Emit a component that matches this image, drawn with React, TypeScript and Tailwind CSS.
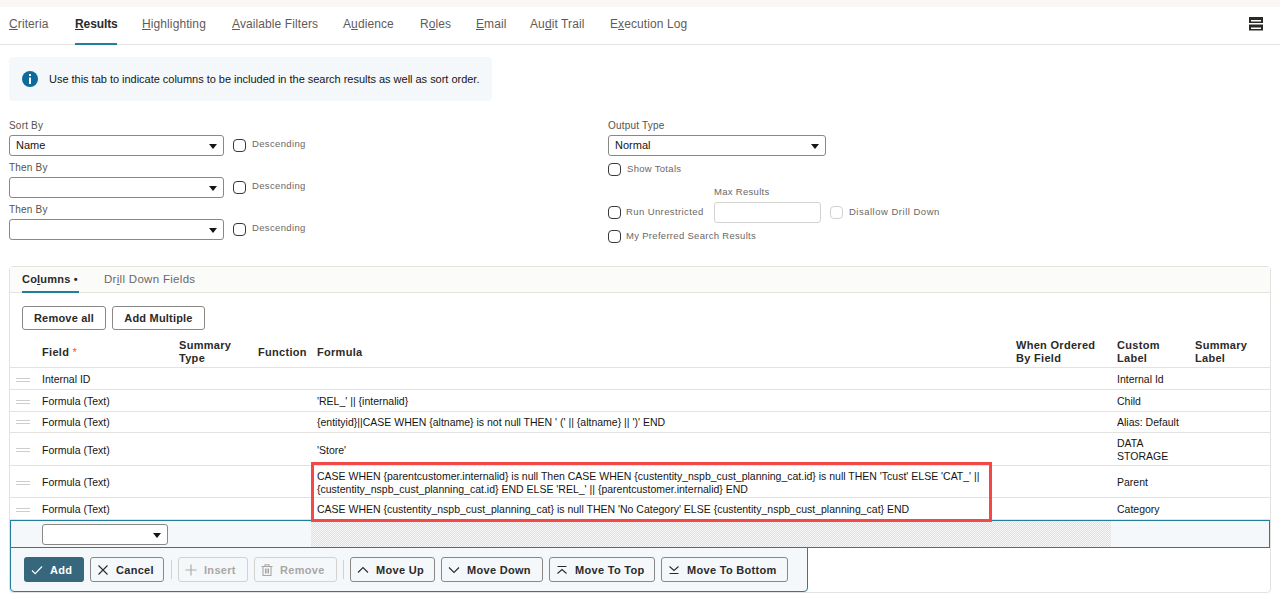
import type { ReactNode } from "react";

const Caret = () => (
  <svg width="8" height="5" viewBox="0 0 8 5" className="absolute right-[6px] top-[8px]">
    <path d="M0 0h8L4 5z" fill="#161513" />
  </svg>
);

const Select = ({ value, width }: { value?: string; width: string }) => (
  <div className={`relative h-[21px] rounded-[3px] border border-[#8a8886] bg-white pl-[6px] text-[11px] leading-[19px] text-[#161513] ${width}`}>
    {value}
    <Caret />
  </div>
);

const Box = ({ disabled }: { disabled?: boolean }) => (
  <span className={`block h-[13px] w-[13px] shrink-0 rounded-[4px] border bg-white ${disabled ? "border-[#d4d2cf]" : "border-[#3a3937]"}`} />
);

const Label = ({ children }: { children: ReactNode }) => (
  <div className="h-[12px] text-[10px] leading-[12px] tracking-[0.2px] text-[#55524e]">{children}</div>
);

const SortField = ({ label, value, first }: { label: string; value?: string; first?: boolean }) => (
  <div className={first ? "" : "mt-[6px]"}>
    <Label>{label}</Label>
    <div className="mt-[3px] flex items-center">
      <Select value={value} width="w-[215px]" />
      <span className="-mt-px ml-[9px]"><Box /></span>
      <span className="-mt-[3px] ml-[6px] text-[9.5px] tracking-[0.35px] text-[#6b6864]">Descending</span>
    </div>
  </div>
);

// toolbar icons, all on a 12px box
const Icon = ({ d, color = "#2b2a28" }: { d: string; color?: string }) => (
  <svg width="12" height="12" viewBox="0 0 12 12" fill="none" stroke={color} strokeWidth="1.1" className="shrink-0">
    <path d={d} />
  </svg>
);

const ToolButton = ({ icon, text, width, disabled }: { icon: ReactNode; text: string; width: string; disabled?: boolean }) => (
  <div className={`flex h-[25px] items-center gap-[7px] rounded-[3px] border pl-[6px] text-[11px] font-bold tracking-[0.3px] ${width} ${disabled ? "border-[#d4d2cf] text-[#a9a7a3]" : "border-[#8a8886] text-[#2b2a28]"}`}>
    {icon}
    <span className="mt-[1px]">{text}</span>
  </div>
);

const Sep = ({ left }: { left: string }) => <div className={`mr-[6px] h-[19px] w-px bg-[#d4d2cf] ${left}`} />;

const tabs: [string, string, string, string][] = [
  ["", "C", "riteria", "w-[41px]"],
  ["", "R", "esults", "w-[42px]"],
  ["", "H", "ighlighting", "w-[65px]"],
  ["", "A", "vailable Filters", "w-[86px]"],
  ["A", "u", "dience", "w-[52px]"],
  ["R", "o", "les", "w-[31px]"],
  ["", "E", "mail", "w-[29px]"],
  ["Au", "d", "it Trail", "w-[55px]"],
  ["E", "x", "ecution Log", "w-[78px]"],
];

const rows: { field: string; formula: ReactNode; label: ReactNode; h: string }[] = [
  { field: "Internal ID", formula: "", label: "Internal Id", h: "h-[22px] pt-[2px]" },
  { field: "Formula (Text)", formula: "'REL_' || {internalid}", label: "Child", h: "h-[22px] pt-[2px]" },
  { field: "Formula (Text)", formula: "{entityid}||CASE WHEN {altname} is not null THEN ' (' || {altname} || ')' END", label: "Alias: Default", h: "h-[21px]" },
  { field: "Formula (Text)", formula: "'Store'", label: <>DATA<br />STORAGE</>, h: "h-[33px] pt-[2px]" },
  {
    field: "Formula (Text)",
    formula: <>CASE WHEN {"{parentcustomer.internalid}"} is null Then CASE WHEN {"{custentity_nspb_cust_planning_cat.id}"} is null THEN 'Tcust' ELSE 'CAT_' ||<br />{"{custentity_nspb_cust_planning_cat.id}"} END ELSE 'REL_' || {"{parentcustomer.internalid}"} END</>,
    label: "Parent",
    h: "h-[32px] pt-[2px]",
  },
  {
    field: "Formula (Text)",
    formula: <>CASE WHEN {"{custentity_nspb_cust_planning_cat}"} is null THEN 'No Category' ELSE {"{custentity_nspb_cust_planning_cat}"} END</>,
    label: "Category",
    h: "h-[22px] pt-[2px]",
  },
];

const colGrid = "grid grid-cols-[32px_136px_80px_59px_699px_101px_78px_1fr]";

export default function App() {
  return (
    <div className="h-[596px] w-[1280px] overflow-hidden bg-white font-['Liberation_Sans',Arial,sans-serif]">
      <div className="h-[7px] bg-[#f9f8f6]" />

      <div className="flex h-[38px] items-stretch justify-between border-b border-[#e4e2df] pl-[9px] pr-[17px]">
        <div className="flex gap-[25px]">
          {tabs.map(([pre, key, post, w]) => {
            const active = key === "R";
            return (
              <div
                key={key + post}
                className={`-mb-px flex items-center whitespace-nowrap border-b-2 pb-[2px] text-[12px] ${w} ${active ? "border-[#227e9e] font-bold tracking-[-0.1px] text-[#2b2a28]" : "border-transparent tracking-[0.1px] text-[#5f5c58]"}`}
              >
                <span>{pre}<u>{key}</u>{post}</span>
              </div>
            );
          })}
        </div>
        <svg width="14" height="14" viewBox="0 0 14 14" className="mt-[10px]">
          <path fillRule="evenodd" d="M0 0h14v6H0zM2 3v1.500h10V3zM0 7.500h14v6H0zM2 10.500V12h10v-1.500z" fill="#2b2a28" />
        </svg>
      </div>

      <div className="ml-[9px] mt-[12px] flex h-[44px] w-[483px] items-center rounded-[4px] bg-[#f5f8fb] pl-[13px] text-[11px] tracking-[-0.02px] text-[#161513]">
        <svg width="16" height="16" viewBox="0 0 16 16" className="mr-[11px]">
          <circle cx="8" cy="8" r="8" fill="#0f6a9c" />
          <rect x="7" y="3" width="2" height="2" fill="#fff" />
          <rect x="7" y="6.500" width="2" height="6.500" fill="#fff" />
        </svg>
        Use this tab to indicate columns to be included in the search results as well as sort order.
      </div>

      <div className="ml-[9px] mt-[19px] flex h-[146px]">
        <div className="w-[599px]">
          <SortField label="Sort By" value="Name" first />
          <SortField label="Then By" />
          <SortField label="Then By" />
        </div>
        <div>
          <Label>Output Type</Label>
          <div className="mt-[3px]">
            <Select value="Normal" width="w-[218px]" />
          </div>
          <div className="mt-[7px] flex items-center">
            <Box />
            <span className="-mt-[1px] ml-[6px] text-[9.5px] tracking-[0.3px] text-[#6b6864]">Show Totals</span>
          </div>
          <div className="mt-[10px] pl-[106px] text-[9.5px] leading-[12px] tracking-[0.3px] text-[#6b6864]">Max Results</div>
          <div className="mt-[4px] flex items-center">
            <Box />
            <span className="-mt-[2px] ml-[5px] w-[88px] text-[9.5px] tracking-[0.4px] text-[#6b6864]">Run Unrestricted</span>
            <span className="h-[21px] w-[107px] rounded-[3px] border border-[#d4d2cf]" />
            <span className="ml-[9px]"><Box disabled /></span>
            <span className="-mt-[2px] ml-[6px] text-[9.5px] tracking-[0.5px] text-[#6b6864]">Disallow Drill Down</span>
          </div>
          <div className="mt-[7px] flex items-center">
            <Box />
            <span className="-mt-[2px] ml-[5px] text-[9.5px] tracking-[0.3px] text-[#6b6864]">My Preferred Search Results</span>
          </div>
        </div>
      </div>

      <div className="relative ml-[9px] h-[327px] w-[1262px] rounded-[4px] border border-[#e4e2df]">
        <div className="flex h-[26px] gap-[25px] border-b border-[#e4e2df] bg-[#fbfbfa] pl-[12px] tracking-[0.2px]">
          <div className="-mb-px flex w-[57px] items-center border-b-2 border-[#227e9e] text-[11px] font-bold text-[#2b2a28]">
            <span>Co<u>l</u>umns •</span>
          </div>
          <div className="flex items-center text-[11.500px] tracking-[0.3px] text-[#6b6864]">
            <span>Dr<u>i</u>ll Down Fields</span>
          </div>
        </div>

        <div className="flex gap-[6px] pl-[12px] pt-[13px]">
          <div className="flex h-[24px] w-[84px] items-center justify-center rounded-[3px] border border-[#8a8886] text-[11px] font-bold tracking-[0.2px] text-[#2b2a28]">Remove all</div>
          <div className="flex h-[24px] w-[93px] items-center justify-center rounded-[3px] border border-[#8a8886] text-[11px] font-bold tracking-[0.2px] text-[#2b2a28]">Add Multiple</div>
        </div>

        <div className={`${colGrid} mt-[7px] h-[31px] items-center border-b border-[#e4e2df] pb-[1px] text-[11px] font-bold leading-[13px] tracking-[0.3px] text-[#2b2a28]`}>
          <span />
          <span className="mt-[2px]">Field <span className="text-[11px] font-normal text-[#d9602a]">*</span></span>
          <span className="pl-[1px]">Summary<br />Type</span>
          <span className="mt-[2px]">Function</span>
          <span className="mt-[2px]">Formula</span>
          <span>When Ordered<br />By Field</span>
          <span>Custom<br />Label</span>
          <span>Summary<br />Label</span>
        </div>

        {rows.map((r, i) => (
          <div key={i} className={`${colGrid} ${r.h} items-center border-b border-[#e4e2df] text-[10.500px] leading-[13px] text-[#161513]`}>
            <span className="ml-[6px] h-[4px] w-[14px] border-y border-[#cfcdca]" />
            <span>{r.field}</span>
            <span />
            <span />
            <span>{r.formula}</span>
            <span />
            <span>{r.label}</span>
            <span />
          </div>
        ))}

        <div className="grid h-[28px] grid-cols-[31px_136px_80px_59px_699px_101px_78px_1fr] border border-[#227e9e] bg-[#f5f8fb]">
          <span />
          <div className="pt-[3px]"><Select width="w-[126px]" /></div>
          <span />
          <span />
          <span className="-ml-[6px] w-[800px] bg-[conic-gradient(#e0e0e0_25%,#f6f6f6_0_50%,#e0e0e0_0_75%,#f6f6f6_0)] bg-[length:2px_2px]" />
          <span />
          <span />
          <span />
        </div>

        <div className="-mt-px flex h-[45px] w-[798px] items-center rounded-b-[4px] border border-[#227e9e] bg-[#f5f8fb] pl-[13px]">
          <div className="flex h-[25px] w-[60px] items-center gap-[7px] rounded-[3px] bg-[#36677d] pl-[7px] text-[11px] font-bold tracking-[0.3px] text-white">
            <Icon d="M1 6.500L4.200 9.700 11 2.500" color="#ffffff" />
            <span className="mt-[1px]">Add</span>
          </div>
          <div className="w-[6px]" />
          <ToolButton icon={<Icon d="M1.500 1.500l9 9M10.500 1.500l-9 9" />} text="Cancel" width="w-[74px]" />
          <Sep left="ml-[7px]" />
          <ToolButton disabled icon={<Icon d="M6 .5v11M.5 6h11" color="#a9a7a3" />} text="Insert" width="w-[70px]" />
          <div className="w-[6px]" />
          <ToolButton disabled icon={<Icon d="M.5 2.500h11M4 2.500V.7h4v1.800M2 2.500v9h8v-9M4.500 4.500v5M6 4.500v5M7.500 4.500v5" color="#a9a7a3" />} text="Remove" width="w-[83px]" />
          <Sep left="ml-[6px]" />
          <ToolButton icon={<Icon d="M1 8.500l5-5 5 5" />} text="Move Up" width="w-[85px]" />
          <div className="w-[6px]" />
          <ToolButton icon={<Icon d="M1 3.500l5 5 5-5" />} text="Move Down" width="w-[102px]" />
          <div className="w-[6px]" />
          <ToolButton icon={<Icon d="M1.500 2.500h9M1.500 9.500L6 5.500l4.500 4" />} text="Move To Top" width="w-[106px]" />
          <div className="w-[6px]" />
          <ToolButton icon={<Icon d="M1.500 2.500L6 6.500l4.500-4M1.500 9.500h9" />} text="Move To Bottom" width="w-[127px]" />
        </div>

        <div className="absolute left-[301px] top-[195px] h-[60px] w-[681px] border-[3px] border-[#f44848]" />
      </div>
    </div>
  );
}
